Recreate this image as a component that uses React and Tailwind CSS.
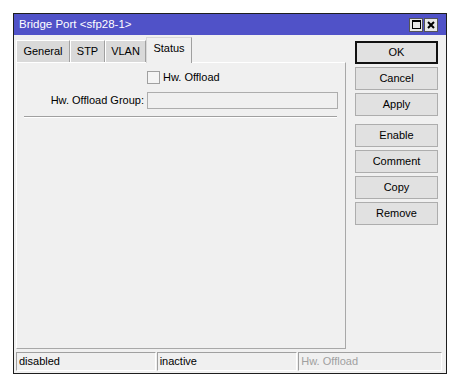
import React from "react";

const tabs = ["General", "STP", "VLAN", "Status"];
const tabWidths = { General: "w-[54px]", STP: "w-[35px]", VLAN: "w-[41px]", Status: "w-[46px]" };

function Btn({ label, primary, className = "" }) {
  return (
    <div
      className={`h-[23px] flex items-center justify-center bg-[#e1e1e1] text-black ${
        primary ? "border-2 border-[#111]" : "border border-[#adadad]"
      } ${className}`}
    >
      {label}
    </div>
  );
}

function Field({ text, w, dim }) {
  return (
    <div
      className={`${w} h-[19px] flex items-center px-[2px] border-t border-l border-[#a0a0a0] border-b border-r border-b-white border-r-white ${
        dim ? "text-[#a0a0a0]" : "text-black"
      }`}
    >
      {text}
    </div>
  );
}

export default function App() {
  return (
    <div
      className="w-[456px] h-[389px] bg-white pl-[13px] pt-[13px] text-[11px] leading-none"
      style={{ fontFamily: '"Liberation Sans", Arial, sans-serif' }}
    >
      <div className="w-[434px] h-[361px] border border-[#1e1e1e] flex flex-col bg-[#f0f0f0]">
        {/* title bar */}
        <div className="h-[21px] bg-[#5052c8] flex items-center pl-[5px] pr-[8px] text-white text-[11.5px]">
          <span className="flex-1">Bridge Port &lt;sfp28-1&gt;</span>
          <div className="flex gap-[1px]">
            <div className="w-[14px] h-[14px] bg-[#e8e8e8] border border-[#555] flex items-center justify-center">
              <div className="w-[9px] h-[9px] border border-black border-t-2" />
            </div>
            <div className="w-[14px] h-[14px] bg-[#e8e8e8] border border-[#555] flex items-center justify-center">
              <svg width="8" height="8" viewBox="0 0 8 8">
                <path d="M1 1 L7 7 M7 1 L1 7" stroke="#000" strokeWidth="2" />
              </svg>
            </div>
          </div>
        </div>

        {/* body */}
        <div className="flex-1 flex flex-col pl-[2px] pr-[4px]">
          <div className="flex">
            {/* left: tabs + panel */}
            <div className="w-[330px] flex flex-col pt-[2px]">
              <div className="flex items-end h-[25px]">
                {tabs.map((t) => {
                  const active = t === "Status";
                  return (
                    <div
                      key={t}
                      className={`${tabWidths[t]} flex items-center justify-center border-t border-l border-white border-r border-r-[#a0a0a0] ${
                        active
                          ? "h-[26px] bg-[#f0f0f0] -mb-[1px] relative z-10 pb-[4px] border-t-[#d8d8d8] border-l-[#d8d8d8]"
                          : "h-[22px] bg-[#d9d9d9]"
                      }`}
                    >
                      {t}
                    </div>
                  );
                })}
              </div>
              <div className="h-[287px] border border-[#a8a8a8] border-l-white border-t-white">
                <div className="flex items-center mt-[8px] h-[13px]">
                  <div className="w-[130px]" />
                  <div className="w-[13px] h-[13px] border border-[#a0a0a0] bg-[#f4f4f4]" />
                  <span className="ml-[3px]">Hw. Offload</span>
                </div>
                <div className="flex items-center mt-[8px]">
                  <div className="w-[127px] text-right">Hw. Offload Group:</div>
                  <div className="ml-[3px] w-[191px] h-[17px] border border-[#adadad] bg-[#f0f0f0]" />
                </div>
                <div className="ml-[7px] w-[313px] mt-[7px] border-t border-[#a0a0a0] border-b border-b-white" />
              </div>
            </div>

            {/* right: buttons */}
            <div className="ml-[9px] w-[83px] flex flex-col pt-[6px]">
              <Btn label="OK" primary />
              <Btn label="Cancel" className="mt-[3px]" />
              <Btn label="Apply" className="mt-[3px]" />
              <Btn label="Enable" className="mt-[8px]" />
              <Btn label="Comment" className="mt-[3px]" />
              <Btn label="Copy" className="mt-[3px]" />
              <Btn label="Remove" className="mt-[3px]" />
            </div>
          </div>

          {/* status bar */}
          <div className="flex gap-[1px] mt-[3px]">
            <Field text="disabled" w="w-[140px]" />
            <Field text="inactive" w="w-[141px]" />
            <Field text="Hw. Offload" w="w-[144px]" dim />
          </div>
        </div>
      </div>
    </div>
  );
}
